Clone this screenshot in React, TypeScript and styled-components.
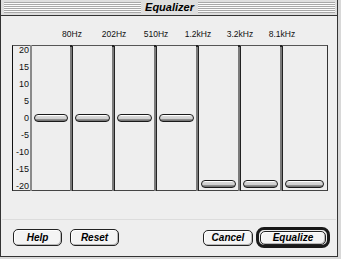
import React from "react";
import styled, { createGlobalStyle } from "styled-components";

const Global = createGlobalStyle`
  html, body { margin: 0; padding: 0; background: #d8d8d8; }
  body { font-family: "Liberation Sans", Arial, sans-serif; }
`;

const Window = styled.div`
  width: 338px;
  height: 257px;
  box-sizing: border-box;
  border-left: 1px solid #333;
  border-right: 1px solid #333;
  border-bottom: 1px solid #333;
  background: #eeeeee;
  display: flex;
  flex-direction: column;
`;

const TitleBar = styled.div`
  height: 15px;
  border-bottom: 1px solid #333;
  background: #dedede;
  display: flex;
  align-items: center;
  padding: 0 2px 0 3px;
`;

const Stripes = styled.div`
  flex: 1;
  height: 11px;
  background: repeating-linear-gradient(
    to bottom,
    #a8a8a8 0px,
    #a8a8a8 1px,
    #fbfbfb 1px,
    #fbfbfb 2px
  );
`;

const Title = styled.div`
  padding: 0 4px;
  font: italic bold 11px "Liberation Sans", Arial, sans-serif;
  color: #000;
  line-height: 15px;
`;

const Content = styled.div`
  flex: 1;
  display: flex;
  flex-direction: column;
  padding: 13px 9px 8px 11px;
`;

const LabelRow = styled.div`
  height: 10px;
  display: flex;
  padding-left: 39px;
  margin-bottom: 6px;
`;

const FreqLabel = styled.div`
  width: 42px;
  text-align: center;
  font: 8.5px "Liberation Sans", Arial, sans-serif;
  line-height: 10px;
  color: #111;
`;

const Panel = styled.div`
  width: 316px;
  height: 146px;
  box-sizing: border-box;
  border-top: 1px solid #555;
  border-left: 1px solid #111;
  border-right: 1px solid #333;
  border-bottom: 1px solid #444;
  display: grid;
  grid-template-columns: 19px 41px repeat(5, 42px) 1fr;
`;

const Scale = styled.div`
  border-right: 2px solid #8a8a8a;
  display: flex;
  flex-direction: column;
  gap: 7px;
  margin-top: -1px;
  padding-right: 1px;
`;

const ScaleLabel = styled.div`
  height: 10px;
  line-height: 10px;
  text-align: right;
  font: 9px "Liberation Sans", Arial, sans-serif;
  color: #111;
`;

const SliderColumn = styled.div<{ $last?: boolean }>`
  position: relative;
  ${(p) =>
    p.$last
      ? ""
      : `
    border-right: 1px solid #222;
    box-shadow: inset -2px 0 0 #7a7a7a;
    &::before {
      content: "";
      position: absolute;
      top: -1px;
      right: 0;
      width: 2px;
      height: 2px;
      background: #222;
    }
  `}
`;

const Thumb = styled.div<{ $last?: boolean }>`
  position: absolute;
  left: 2px;
  right: ${(p) => (p.$last ? "3px" : "4px")};
  height: 8px;
  box-sizing: border-box;
  border: 1px solid #1a1a1a;
  border-radius: 4px;
  background: linear-gradient(
    to bottom,
    #ffffff 0px,
    #ffffff 1px,
    #dadada 1px,
    #cdcdcd 4px,
    #9a9a9a 4px,
    #6a6a6a 6px
  );
`;

const Separator = styled.div`
  margin-top: 28px;
  height: 1px;
  margin-left: -10px;
  margin-right: -8px;
  background: #dcdcdc;
`;

const ButtonRow = styled.div`
  margin: 7px -2px 0 1px;
  height: 21px;
  display: flex;
  align-items: center;
`;

const Group = styled.div<{ $gap: number }>`
  display: flex;
  align-items: center;
  gap: ${(p) => p.$gap}px;
`;

const Spacer = styled.div`
  flex: 1;
`;

const Button = styled.button<{ $w: number; $h?: number }>`
  width: ${(p) => p.$w}px;
  height: ${(p) => p.$h ?? 17}px;
  box-sizing: border-box;
  padding: 0;
  margin: 0;
  border: 1px solid #222;
  border-radius: 5px;
  background: #f4f4f4;
  box-shadow: inset -1px -1px 0 #b8b8b8, inset 1px 1px 0 #ffffff;
  font: italic bold 10px "Liberation Sans", Arial, sans-serif;
  color: #000;
  line-height: 1;
  display: flex;
  align-items: center;
  justify-content: center;
`;

const DefaultRing = styled.div`
  width: 74px;
  height: 21px;
  box-sizing: border-box;
  border: 3px solid #1a1a1a;
  border-radius: 8px;
  padding: 0 1px;
  display: flex;
  align-items: center;
`;

const freqs = ["80Hz", "202Hz", "510Hz", "1.2kHz", "3.2kHz", "8.1kHz"];
const scale = ["20", "15", "10", "5", "0", "-5", "-10", "-15", "-20"];
const gains = [0, 0, 0, 0, -18, -18, -18];

const thumbTop = (v: number) => Math.round(68 - v * (66 / 18));

export default function App() {
  return (
    <>
      <Global />
      <Window>
        <TitleBar>
          <Stripes />
          <Title>Equalizer</Title>
          <Stripes />
        </TitleBar>
        <Content>
          <LabelRow>
            {freqs.map((f) => (
              <FreqLabel key={f}>{f}</FreqLabel>
            ))}
          </LabelRow>
          <Panel>
            <Scale>
              {scale.map((s) => (
                <ScaleLabel key={s}>{s}</ScaleLabel>
              ))}
            </Scale>
            {gains.map((g, i) => {
              const last = i === gains.length - 1;
              return (
                <SliderColumn key={i} $last={last}>
                  <Thumb $last={last} style={{ top: thumbTop(g) }} />
                </SliderColumn>
              );
            })}
          </Panel>
          <Separator />
          <ButtonRow>
            <Group $gap={8}>
              <Button $w={49}>Help</Button>
              <Button $w={49}>Reset</Button>
            </Group>
            <Spacer />
            <Group $gap={3}>
              <Button $w={50} $h={16}>Cancel</Button>
              <DefaultRing>
                <Button $w={66} $h={14}>Equalize</Button>
              </DefaultRing>
            </Group>
          </ButtonRow>
        </Content>
      </Window>
    </>
  );
}
